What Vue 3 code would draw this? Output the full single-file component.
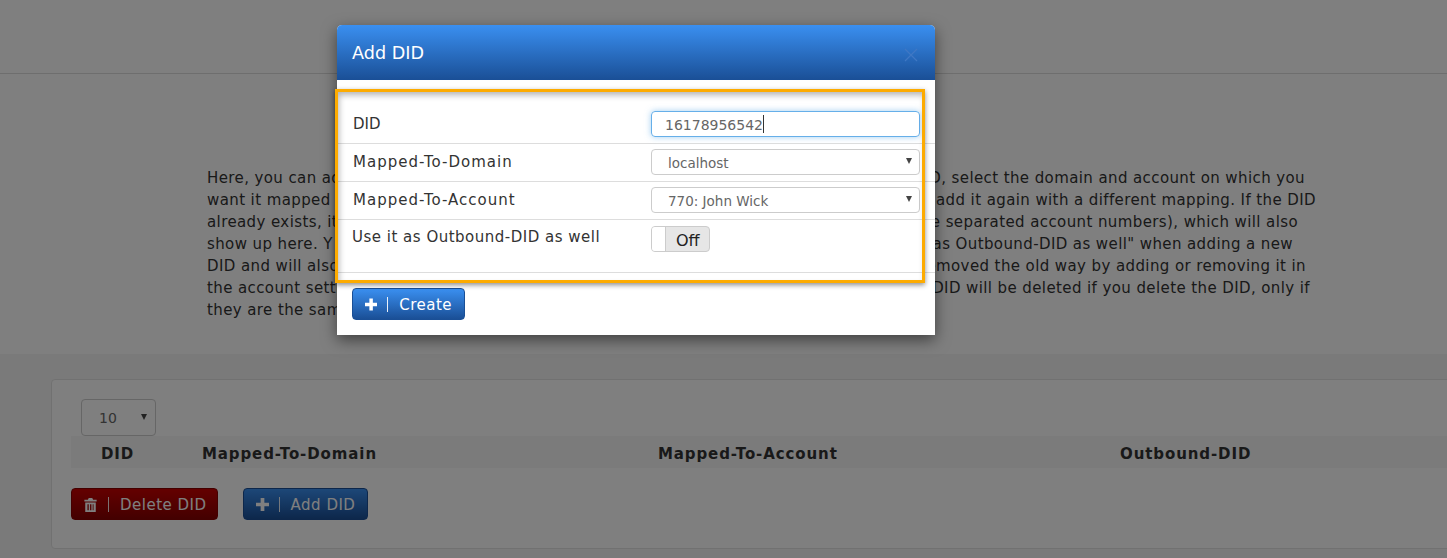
<script setup>
const lines = [
  { text: 'Here, you can add', tail: 'D, select the domain and account on which you', w: 1098 },
  { text: 'want it mapped', tail: 'add it again with a different mapping. If the DID', w: 1109 },
  { text: 'already exists, it', tail: 'e separated account numbers), which will also', w: 1091 },
  { text: 'show up here. Y', tail: 'as Outbound-DID as well" when adding a new', w: 1086 },
  { text: 'DID and will also', tail: 'removed the old way by adding or removing it in', w: 1099 },
  { text: 'the account settin', tail: 'DID will be deleted if you delete the DID, only if', w: 1103 },
  { text: 'they are the sam', tail: '', w: 1098 }
]
const fields = [
  { label: 'Mapped-To-Domain', value: 'localhost' },
  { label: 'Mapped-To-Account', value: '770: John Wick' }
]
const columns = ['DID', 'Mapped-To-Domain', 'Mapped-To-Account', 'Outbound-DID']
</script>

<template>
  <div class="page">
    <header class="topbar"></header>
    <section class="intro">
      <div class="copy">
        <div v-for="line in lines" :key="line.text" class="line" :style="{ width: line.w + 'px' }">
          <span class="line-text">{{ line.text }}</span>
          <span class="line-tail">{{ line.tail }}</span>
        </div>
      </div>
    </section>
    <section class="lower">
      <div class="panel">
        <div class="page-size"><span>10</span><i class="caret"></i></div>
        <div class="thead">
          <div v-for="col in columns" :key="col">{{ col }}</div>
        </div>
        <div class="actions">
          <button class="btn red" type="button">
            <svg class="trash" viewBox="0 0 14 16"><path d="M5 0h4l1 2h4v2H0V2h4zM1 5h12v11H1zm2.500 2v7h1.500V7zm3 0v7h1.500V7zm3 0v7h1V7z" fill="currentColor" fill-rule="evenodd"/></svg>
            <i class="sep"></i><span>Delete DID</span>
          </button>
          <button class="btn blue" type="button">
            <svg class="plus" viewBox="0 0 14 14"><path d="M5 0h4v5h5v4H9v5H5V9H0V5h5z" fill="currentColor"/></svg>
            <i class="sep"></i><span>Add DID</span>
          </button>
        </div>
      </div>
    </section>

    <div class="backdrop"></div>

    <div class="modal">
      <div class="modal-head">
        <h4>Add DID</h4>
        <svg class="close" viewBox="0 0 14 14"><path d="M1 1l12 12M13 1L1 13" stroke="currentColor" stroke-width="1.200" fill="none"/></svg>
      </div>
      <div class="modal-body">
        <div class="row first">
          <label>DID</label>
          <div class="input"><span>16178956542</span><i class="cursor"></i></div>
        </div>
        <div v-for="f in fields" :key="f.label" class="row">
          <label class="wide">{{ f.label }}</label>
          <div class="select"><span>{{ f.value }}</span><i class="caret"></i></div>
        </div>
        <div class="row last">
          <label class="outbound">Use it as Outbound-DID as well</label>
          <div class="toggle"><i class="knob"></i><span>Off</span></div>
        </div>
        <button class="btn blue create" type="button">
          <svg class="plus" viewBox="0 0 14 14"><path d="M5 0h4v5h5v4H9v5H5V9H0V5h5z" fill="currentColor"/></svg>
          <i class="sep"></i><span>Create</span>
        </button>
      </div>
      <div class="highlight"></div>
    </div>
  </div>
</template>

<style>
html, body { margin: 0; background: #fff; }
</style>

<style scoped>
.page {
  position: relative;
  width: 1447px;
  height: 558px;
  overflow: hidden;
  font-family: "DejaVu Sans", sans-serif;
  font-size: 15px;
  color: #333;
  background: #fff;
}
.topbar { height: 73px; border-bottom: 1px solid #ddd; box-sizing: content-box; }
.intro { height: 280px; display: flex; align-items: flex-start; }
.copy { margin: 93px 0 0 207px; line-height: 22px; color: #333; letter-spacing: .4px; }
.line { display: flex; justify-content: space-between; white-space: nowrap; height: 22px; }
.line-text { flex: none; }
.line-tail { flex: none; }
.lower { height: 204px; background: #f5f5f5; padding: 25px 0 0 51px; }
.panel {
  width: 1500px;
  height: 170px;
  box-sizing: border-box;
  border: 1px solid #e3e3e3;
  border-radius: 4px;
  background: #fff;
  padding: 19px 0 0 19px;
}
.page-size {
  margin-left: 10px;
  width: 75px;
  height: 37px;
  box-sizing: border-box;
  border: 1px solid #ccc;
  border-radius: 4px;
  padding: 0 8px 0 17px;
  display: flex;
  align-items: center;
  justify-content: space-between;
  color: #666;
  font-size: 14px;
}
.caret {
  width: 0;
  height: 0;
  border-left: 3.500px solid transparent;
  border-right: 3.500px solid transparent;
  border-top: 6px solid #444;
  margin-top: -2px;
}
.thead {
  height: 32px;
  box-sizing: border-box;
  padding: 4px 0 0 30px;
  background: #f6f6f6;
  display: grid;
  grid-template-columns: 101px 456px 462px 1fr;
  align-items: center;
  font-weight: 700;
  font-size: 15px;
  letter-spacing: .9px;
  color: #333;
}
.actions { display: flex; gap: 25px; margin-top: 20px; }
.btn {
  height: 32px;
  box-sizing: border-box;
  border-radius: 4px;
  display: inline-flex;
  align-items: center;
  font-family: inherit;
  font-size: 15px;
  letter-spacing: .5px;
  color: #fff;
  padding: 0 12px;
  cursor: pointer;
}
.btn span { padding-top: 2px; }
.btn svg { margin-top: 1px; }
.btn.blue { background: linear-gradient(#3a8ff0, #1a4f96); border: 1px solid #1a4f96; }
.btn.red { background: linear-gradient(#c80000, #880000); border: 1px solid #880000; padding-right: 10px; }
.sep { width: 1px; height: 15px; background: #fff; margin: 0 11px 0 10px; opacity: .9; }
.plus { width: 13px; height: 13px; }
.trash { width: 13px; height: 14px; margin-right: 1px; }
.backdrop { position: absolute; inset: 0; background: rgba(0, 0, 0, .5); }
.modal {
  position: absolute;
  left: 337px;
  top: 25px;
  width: 598px;
  background: #fff;
  border-radius: 5px 5px 0 0;
  box-shadow: 0 5px 15px rgba(0, 0, 0, .5);
}
.modal-head {
  height: 55px;
  box-sizing: border-box;
  padding: 0 15px;
  display: flex;
  align-items: center;
  justify-content: space-between;
  background: linear-gradient(#3a8ff0, #1a4f96);
  border-radius: 5px 5px 0 0;
}
.modal-head h4 { margin: 0; font-size: 17.600px; font-weight: 400; color: #fff; }
.close { width: 14px; height: 14px; color: #3f78c4; margin-right: 2px; margin-top: 5px; }
.modal-body { padding: 0 0 15px; }
.row {
  display: grid;
  grid-template-columns: 298px 269px;
  align-items: center;
  height: 38px;
  box-sizing: border-box;
  padding: 0 15px 1px 16px;
  border-bottom: 1px solid #ddd;
}
.row.first { height: 64px; padding-top: 30px; padding-bottom: 5px; }
.row.last {
  height: 53px;
  grid-template-columns: 299px 269px;
  align-items: start;
  padding-top: 6px;
  padding-left: 15px;
}
.row label { color: #333; }
.row label.wide { letter-spacing: 1px; }
.row label.outbound { margin-top: 2px; letter-spacing: .5px; white-space: nowrap; }
.input, .select {
  width: 269px;
  height: 26px;
  box-sizing: border-box;
  border-radius: 4px;
  font-size: 14px;
  color: #666;
  display: flex;
  align-items: center;
}
.input span, .select span { padding-top: 2px; }
.input {
  border: 1px solid #66afe9;
  box-shadow: 0 0 6px rgba(102, 175, 233, .6);
  padding-left: 13px;
}
.cursor { width: 1px; height: 18px; background: #333; }
.select { border: 1px solid #ccc; padding: 0 7px 0 16px; justify-content: space-between; font-size: 13.500px; }
.toggle {
  width: 59px;
  height: 26px;
  box-sizing: border-box;
  border: 1px solid #ccc;
  border-radius: 4px;
  background: #e6e6e6;
  display: flex;
  align-items: center;
  overflow: hidden;
}
.knob { width: 13px; height: 100%; background: #fff; border-right: 1px solid #ccc; }
.toggle span { margin-left: 10px; color: #222; font-size: 16px; padding-top: 2px; }
.create { margin: 15px 0 0 15px; width: 113px; }
.highlight {
  position: absolute;
  left: -2px;
  top: 64px;
  width: 590px;
  height: 194px;
  box-sizing: border-box;
  border: 3px solid #fdab00;
  box-shadow: 0 2px 5px rgba(0, 0, 0, .45), inset 2px 4px 6px -1px rgba(0, 0, 0, .3);
  pointer-events: none;
}
</style>
